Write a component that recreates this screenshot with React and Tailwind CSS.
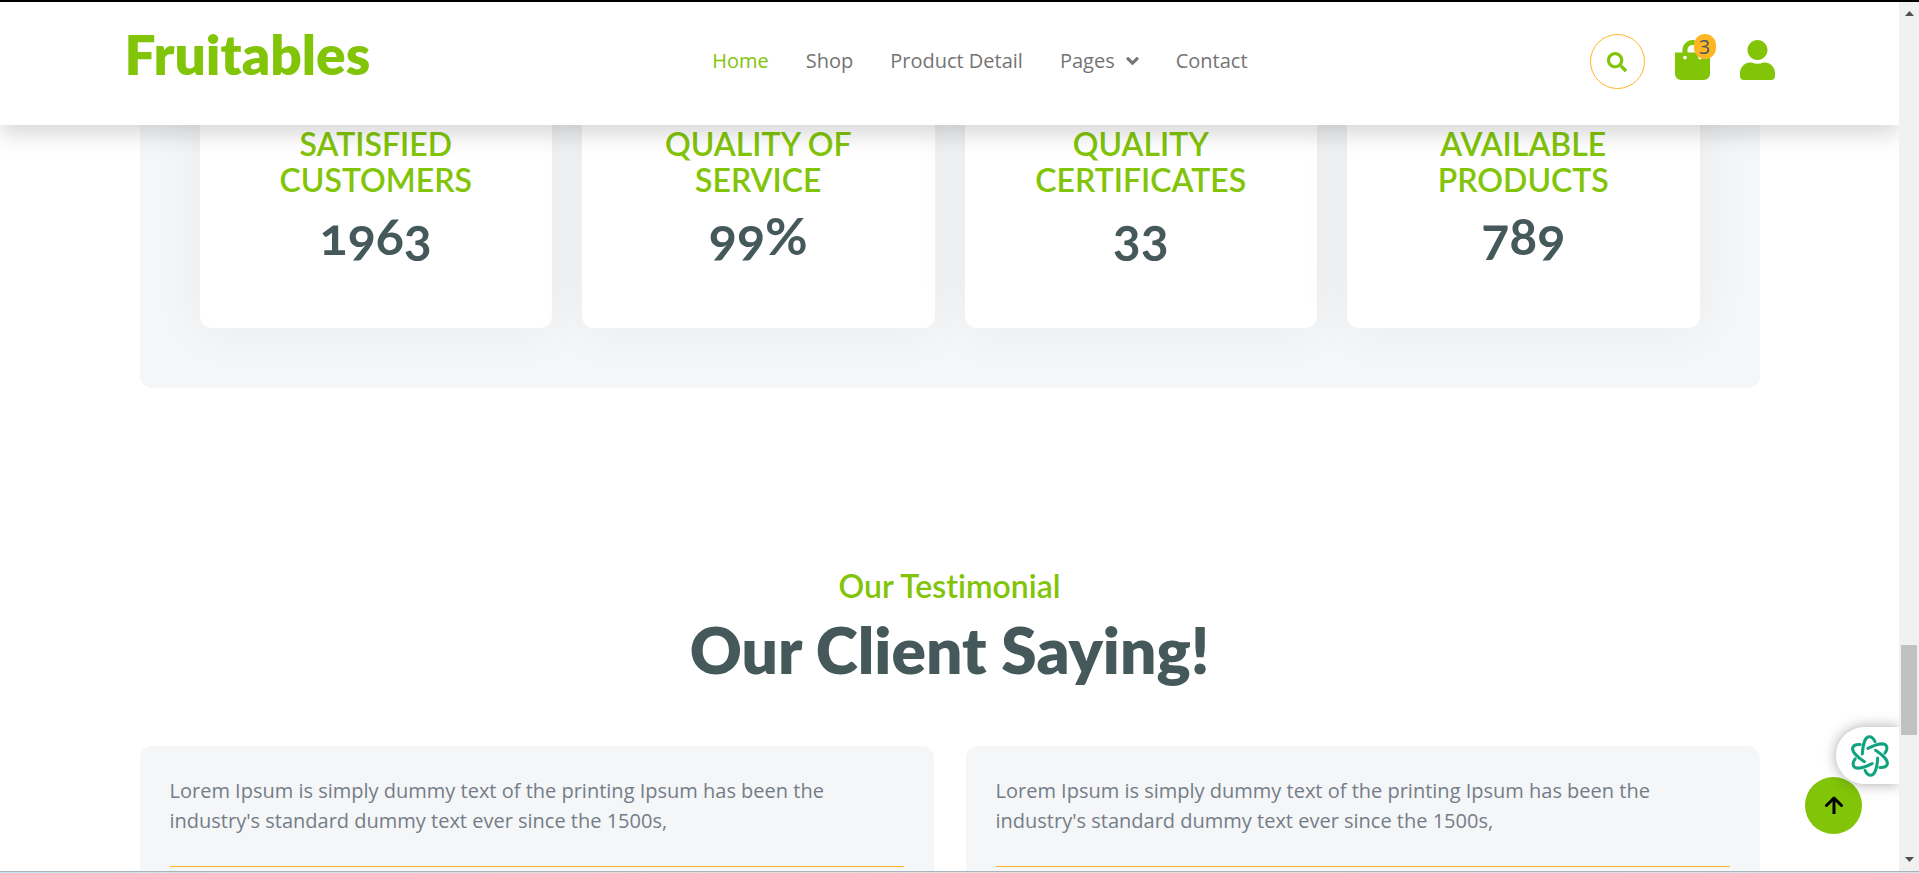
import { FaAngleDown, FaSearch, FaShoppingBag, FaUser } from 'react-icons/fa';

const stats = [
  { label: 'Satisfied Customers', value: '1963' },
  { label: 'Quality of Service', value: '99%' },
  { label: 'Quality Certificates', value: '33' },
  { label: 'Available Products', value: '789' },
];

const links = ['Home', 'Shop', 'Product Detail', 'Pages', 'Contact'];

const quote =
  "Lorem Ipsum is simply dummy text of the printing Ipsum has been the industry's standard dummy text ever since the 1500s,";

function Header() {
  return (
    <header className="absolute inset-x-0 top-0 z-10 bg-white shadow-[0_10px_20px_rgba(0,0,0,0.15)]">
      <div className="mx-auto flex h-[123px] max-w-[1650px] items-center pb-1">
        <a href="#home" className="pb-4 font-[Lato,sans-serif] text-[55px] leading-[60px] font-extrabold text-[#81c408]">
          Fruitables
        </a>
        <nav className="flex flex-1 justify-center gap-[37px] pb-0.5">
          {links.map((link) => (
            <a
              key={link}
              href={`#${link}`}
              className={`flex items-center gap-[11px] py-2.5 text-xl leading-[30px] ${
                link === 'Home' ? 'text-[#81c408]' : 'text-[#747474]'
              }`}
            >
              {link}
              {link === 'Pages' && <FaAngleDown className="h-5 w-[13px]" />}
            </a>
          ))}
        </nav>
        <div className="flex items-center gap-[30px]">
          <button
            aria-label="Search"
            className="flex size-[55px] items-center justify-center rounded-full border border-[#ffb524] text-[#81c408]"
          >
            <FaSearch className="size-5" />
          </button>
          <a href="#cart" aria-label="Cart" className="relative h-[43px] text-[#81c408]">
            <FaShoppingBag className="h-10 w-[35px]" />
            <span className="absolute -top-1.5 left-[19px] flex h-[25px] w-[22px] items-center justify-center rounded-full bg-[#ffb524] text-xl leading-[25px] text-[#45595b]">
              3
            </span>
          </a>
          <a href="#account" aria-label="Account" className="h-[43px] text-[#81c408]">
            <FaUser className="h-10 w-[35px]" />
          </a>
        </div>
      </div>
    </header>
  );
}

function Stats() {
  return (
    <section className="grid grid-cols-4 gap-[30px] rounded-xl bg-[#f4f6f8] px-[60px] pb-[60px]">
      {stats.map((s) => (
        <div
          key={s.label}
          className="flex flex-col items-center rounded-xl bg-white px-[60px] pt-[124px] pb-[66px] text-center font-[Lato,sans-serif] shadow-[0_0_56px_rgba(0,0,0,0.05)]"
        >
          <h4 className="mb-2.5 text-[32px] leading-9 font-semibold text-[#81c408] uppercase">{s.label}</h4>
          <p className="text-[52px] leading-[54px] font-bold text-[#45595b] [font-variant-numeric:oldstyle-nums]">
            {s.value}
          </p>
        </div>
      ))}
    </section>
  );
}

function Testimonials() {
  return (
    <section className="pt-[180px]">
      <div className="text-center font-[Lato,sans-serif] [font-variant-ligatures:none]">
        <h4 className="mb-2.5 text-[32px] leading-9 font-semibold text-[#81c408]">Our Testimonial</h4>
        <h1 className="mb-[60px] text-[64px] leading-[72px] font-extrabold text-[#45595b]">Our Client Saying!</h1>
      </div>
      <div className="grid grid-cols-2 gap-8">
        {[0, 1].map((i) => (
          <article key={i} className="rounded-xl bg-[#f4f6f8] p-[30px]">
            <p className="border-b border-[#ffb524] pb-[30px] text-xl leading-[30px] text-[#747d88]">{quote}</p>
          </article>
        ))}
      </div>
    </section>
  );
}

function KnotIcon() {
  return (
    <svg viewBox="-21 -21 42 42" className="size-[42px]" fill="none" stroke="#10a37f" strokeWidth="3" strokeLinecap="round">
      {[0, 60, 120, 180, 240, 300].map((angle) => (
        <path
          key={angle}
          transform={`rotate(${angle})`}
          d="M-7.7 -2C-7.3 -9 -5.5 -19.2 -0.7 -19.2C2 -19.2 3.8 -17 5 -14.3"
        />
      ))}
    </svg>
  );
}

function FloatingButtons() {
  return (
    <>
      <a
        href="#top"
        aria-label="Back to top"
        className="absolute right-[37px] bottom-[37px] flex size-[57px] items-center justify-center rounded-full bg-[#81c408]"
      >
        <svg viewBox="0 0 20 20" className="size-5" fill="none" stroke="#000" strokeWidth="3">
          <path d="M10 2V18" />
          <path d="M2.500 9.500L10 2L17.500 9.500" strokeLinecap="round" strokeLinejoin="round" />
        </svg>
      </a>
      <button
        aria-label="Assistant"
        className="absolute right-0 bottom-[87px] flex h-[57px] w-[63px] items-center justify-center rounded-l-full bg-white pr-1 pl-2 shadow-[0_0_14px_rgba(0,0,0,0.35)]"
      >
        <KnotIcon />
      </button>
    </>
  );
}

function ScrollTrack() {
  return (
    <div className="flex w-5 flex-col items-center justify-between bg-[#f1f1f1] py-[9px]">
      <svg viewBox="0 0 9 5" className="h-[5px] w-[9px]" fill="#505050">
        <path d="M0 5L4.500 0L9 5Z" />
      </svg>
      <div className="flex w-4 flex-1 flex-col">
        <div className="grow-[629]" />
        <div className="h-[90px] bg-[#c1c1c1]" />
        <div className="grow-[122]" />
      </div>
      <svg viewBox="0 0 9 5" className="h-[5px] w-[9px]" fill="#505050">
        <path d="M0 0L4.500 5L9 0Z" />
      </svg>
    </div>
  );
}

export default function App() {
  return (
    <div className="flex h-screen flex-col overflow-hidden bg-white font-['Open_Sans',sans-serif]">
      <div className="h-0.5 shrink-0 bg-black" />
      <div className="flex min-h-0 flex-1">
        <div className="relative flex-1 overflow-hidden">
          <Header />
          <main className="mx-auto max-w-[1650px] px-[15px]">
            <Stats />
            <Testimonials />
          </main>
          <FloatingButtons />
        </div>
        <ScrollTrack />
      </div>
      <div className="h-0.5 shrink-0 border-t border-[#a9b4bd] bg-linear-to-r from-[#c3e6f1] via-[#eadfd6] to-[#d5e3f2]" />
    </div>
  );
}
